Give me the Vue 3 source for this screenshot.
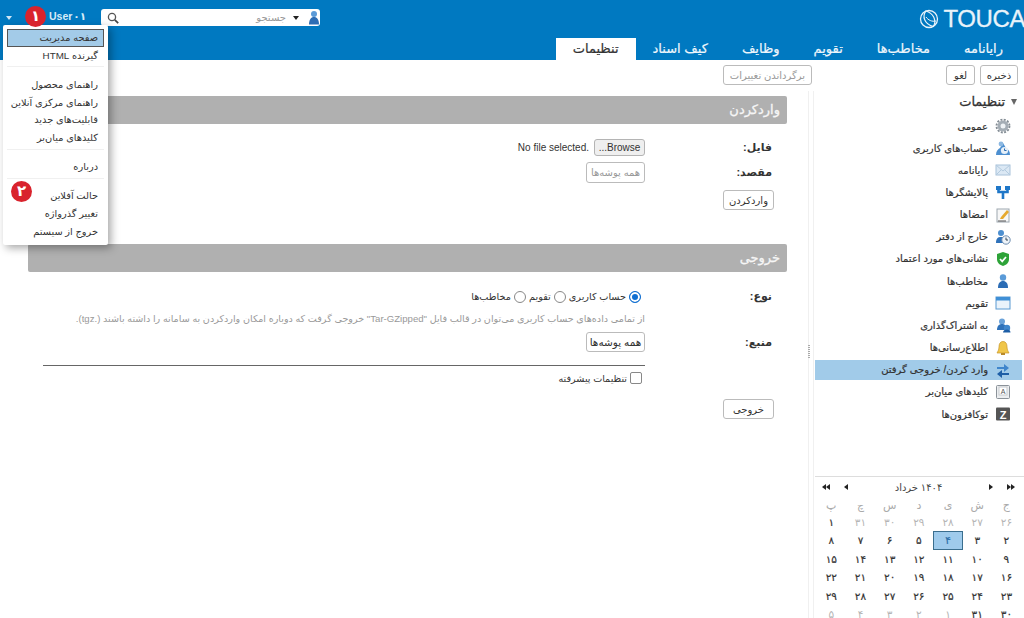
<script setup>
const tabs = ['رایانامه', 'مخاطب‌ها', 'تقویم', 'وظایف', 'کیف اسناد', 'تنظیمات']
const icons = {
  gear: '<circle cx="8" cy="8" r="5.500" fill="#a4adb5"/><circle cx="8" cy="8" r="6.500" fill="none" stroke="#838c94" stroke-width="1.800" stroke-dasharray="2 1.400"/><circle cx="8" cy="8" r="2.500" fill="#eef2f5"/>',
  accounts: '<path d="M1 15c0-4 2-6 4-7l3-5 3 5c2 1 4 3 4 7z" fill="#4d8fd0"/><circle cx="9.500" cy="10.500" r="3.600" fill="#e7f0f8"/><path d="M9.500 8.500v2h2" stroke="#2a6bb0" fill="none"/><circle cx="6" cy="4" r="2.400" fill="#8db9e2"/>',
  mail: '<rect x="1" y="3" width="14" height="10" fill="#dbe8f4" stroke="#a8c2da"/><path d="M1 3l7 6 7-6M1 13l5-5M15 13l-5-5" fill="none" stroke="#b3cade"/>',
  filter: '<path d="M1 2h5v4H1zM10 2h5v4h-5z" fill="#1f77c8"/><path d="M3.500 5v3h9V5M8 8v7" fill="none" stroke="#1f77c8" stroke-width="2.600"/>',
  sign: '<rect x="2" y="2" width="12" height="13" fill="#f7f7f7" stroke="#9da7b0"/><path d="M5 12l1-2 6-7 2 2-6 7z" fill="#e6a92f"/><path d="M3 14h8" stroke="#555"/>',
  ooo: '<circle cx="6" cy="4" r="3" fill="#4d8fd0"/><path d="M1 14c0-5 2-6 5-6s5 1 5 6z" fill="#2f72ba"/><circle cx="11" cy="11" r="4.200" fill="#eef3f8" stroke="#6d8db0"/><path d="M11 8.600V11h2" fill="none" stroke="#345"/>',
  cert: '<path d="M8 1l6 2v5c0 4-3 6-6 7-3-1-6-3-6-7V3z" fill="#2da338"/><path d="M5 8l2.200 2.400L11 6" fill="none" stroke="#fff" stroke-width="1.700"/>',
  contact: '<circle cx="8" cy="4.500" r="3.200" fill="#5b9bd8"/><path d="M3 15c0-5 2-7 5-7s5 2 5 7z" fill="#2c6db5"/>',
  cal: '<rect x="1" y="2" width="14" height="12" fill="#eaf3fb" stroke="#5a9ad2"/><rect x="1" y="2" width="14" height="3.500" fill="#3f8fd6"/>',
  share: '<circle cx="7" cy="4.500" r="3" fill="#6aa2d9"/><path d="M2 13c0-4 2-6 5-6s5 2 5 6z" fill="#2f72ba"/><circle cx="12" cy="11" r="3.200" fill="#3f86cc"/><path d="M8 15.500c0-2 2-3 4-3s3.500 1 3.500 3z" fill="#1d5ea6"/>',
  bell: '<path d="M8 1.500c3 0 4 2.500 4 5.500 0 3 1.500 5 2 6H2c.5-1 2-3 2-6 0-3 1-5.500 4-5.500z" fill="#f0c64a" stroke="#c9962a" stroke-width=".7"/><rect x="6" y="13" width="4" height="2" fill="#b98a2b"/>',
  sync: '<path d="M2 5h7V2l5 4-5 4V7H2z" fill="#3f86cc"/><path d="M14 11H7V8l-5 4 5 4v-3h7z" fill="#1d5ea6"/>',
  keys: '<rect x="1.500" y="1.500" width="13" height="13" rx="1" fill="#eceef0" stroke="#8b9299"/><rect x="4" y="3" width="8" height="8" fill="#fff" stroke="#c6cacd"/><text x="8" y="10" font-size="7" text-anchor="middle" fill="#555" font-family="Liberation Sans">A</text>',
  zimlet: '<rect x="1" y="1.500" width="14" height="13" rx="1" fill="#555"/><text x="8" y="12.500" font-size="11" font-weight="700" text-anchor="middle" fill="#fff" font-family="Liberation Sans">Z</text>'
}
const nav = [
  ['gear', 'عمومی'], ['accounts', 'حساب‌های کاربری'], ['mail', 'رایانامه'], ['filter', 'پالایشگرها'],
  ['sign', 'امضاها'], ['ooo', 'خارج از دفتر'], ['cert', 'نشانی‌های مورد اعتماد'], ['contact', 'مخاطب‌ها'],
  ['cal', 'تقویم'], ['share', 'به اشتراک‌گذاری'], ['bell', 'اطلاع‌رسانی‌ها'], ['sync', 'وارد کردن/ خروجی گرفتن'],
  ['keys', 'کلیدهای میان‌بر'], ['zimlet', 'توکافزون‌ها']
].map(([i, t]) => ({ icon: icons[i], t, sel: i === 'sync' }))
const weekdays = ['ج', 'ش', 'ی', 'د', 'س', 'چ', 'پ']
const fa = n => String(n).replace(/\d/g, d => '۰۱۲۳۴۵۶۷۸۹'[d])
const rows = [
  [26, 27, 28, 29, 30, 31, 1], [2, 3, 4, 5, 6, 7, 8], [9, 10, 11, 12, 13, 14, 15],
  [16, 17, 18, 19, 20, 21, 22], [23, 24, 25, 26, 27, 28, 29], [30, 31, 1, 2, 3, 4, 5]
].map((r, ri) => r.map(n => ({
  n: fa(n),
  off: (ri === 0 && n > 20) || (ri === 5 && n < 10),
  today: ri === 1 && n === 4
})))
const menu = [
  [{ t: 'صفحه مدیریت', sel: true }, { t: 'گیرنده HTML' }],
  [{ t: 'راهنمای محصول' }, { t: 'راهنمای مرکزی آنلاین' }, { t: 'قابلیت‌های جدید' }, { t: 'کلیدهای میان‌بر' }],
  [{ t: 'درباره' }],
  [{ t: 'حالت آفلاین' }, { t: 'تغییر گذرواژه' }, { t: 'خروج از سیستم' }]
]
</script>

<template>
  <div class="app">
    <header class="head">
      <div class="top">
        <span class="caret white-caret"></span>
        <span class="user">User ۰۱</span>
        <div class="search">
          <svg class="mag" width="12" height="12" viewBox="0 0 12 12"><circle cx="5" cy="5" r="3.600" fill="#fff" stroke="#555" stroke-width="1.300"/><path d="M7.800 7.800l3.400 3.400" stroke="#444" stroke-width="1.700"/></svg>
          <span class="search-text" dir="rtl">جستجو</span>
          <span class="caret dark-caret"></span>
          <svg width="10" height="15" viewBox="0 0 10 15"><circle cx="5" cy="4" r="3" fill="#5b9bd8"/><path d="M0 14.500c0-5 2-7.500 5-7.500s5 2.500 5 7.500z" fill="#2c6db5"/></svg>
        </div>
        <div class="logo">
          <svg width="20" height="20" viewBox="0 0 20 20"><circle cx="10" cy="10" r="8.500" fill="none" stroke="#e9f3fa" stroke-width="1.300"/><path d="M7 2C3 7 5 15 14.500 17.500 18 11 14 4 7 2z" fill="none" stroke="#e9f3fa" stroke-width="1.200"/><path d="M7 8c2 3 6 5 10 4" fill="none" stroke="#e9f3fa" stroke-width="1"/></svg>
          <span class="logo-text">TOUCA</span>
        </div>
      </div>
      <nav class="tabs" dir="rtl">
        <span v-for="(t, i) in tabs" :key="t" class="tab" :class="{ active: i === 5 }">{{ t }}</span>
      </nav>
    </header>

    <div class="toolbar" dir="rtl">
      <button class="btn save">ذخیره</button>
      <button class="btn cancel">لغو</button>
      <button class="btn ghost revert">برگرداندن تغییرات</button>
    </div>

    <div class="body" dir="rtl">
      <aside class="side">
        <div class="tree">
          <div class="tree-title"><span class="tri"></span>تنظیمات</div>
          <div v-for="n in nav" :key="n.t" class="item" :class="{ sel: n.sel }">
            <svg class="ico" width="16" height="16" viewBox="0 0 16 16" v-html="n.icon"></svg>
            <span>{{ n.t }}</span>
          </div>
        </div>
        <div class="cal">
          <div class="cal-head">
            <span class="arrows"><i class="ar r"></i><i class="ar r"></i></span>
            <span class="arrows one"><i class="ar r"></i></span>
            <span class="cal-title">۱۴۰۴ خرداد</span>
            <span class="arrows one"><i class="ar l"></i></span>
            <span class="arrows"><i class="ar l"></i><i class="ar l"></i></span>
          </div>
          <div class="cal-grid week">
            <span v-for="d in weekdays" :key="d">{{ d }}</span>
          </div>
          <div v-for="(r, ri) in rows" :key="ri" class="cal-grid">
            <span v-for="(c, ci) in r" :key="ci" class="day" :class="{ off: c.off, today: c.today }">{{ c.n }}</span>
          </div>
        </div>
      </aside>

      <div class="splitter"><span class="grip"></span></div>

      <main class="content">
        <section class="sec">
          <h2 class="sec-title">واردکردن</h2>
          <div class="form form-import">
            <label class="lab">فایل:</label>
            <div class="val file">
              <button class="browse">Browse...</button>
              <span dir="ltr">No file selected.</span>
            </div>
            <label class="lab">مقصد:</label>
            <div class="val"><button class="btn ghost folder">همه پوشه‌ها</button></div>
          </div>
          <button class="btn action">واردکردن</button>
        </section>

        <section class="sec second">
          <h2 class="sec-title">خروجی</h2>
          <div class="form form-export">
            <label class="lab">نوع:</label>
            <div class="val radios">
              <span class="radio on"></span><span>حساب کاربری</span>
              <span class="radio"></span><span>تقویم</span>
              <span class="radio"></span><span>مخاطب‌ها</span>
            </div>
            <span></span>
            <p class="hint">از تمامی داده‌های حساب کاربری می‌توان در قالب فایل "Tar-GZipped" خروجی گرفت که دوباره امکان واردکردن به سامانه را داشته باشند (.tgz).</p>
            <label class="lab">منبع:</label>
            <div class="val"><button class="btn folder">همه پوشه‌ها</button></div>
            <span></span>
            <div class="rule-wrap">
              <hr class="rule" />
              <div class="check"><span class="box"></span><span>تنظیمات پیشرفته</span></div>
            </div>
          </div>
          <button class="btn action export">خروجی</button>
        </section>
      </main>
    </div>

    <div class="menu" dir="rtl">
      <div v-for="(g, gi) in menu" :key="gi" class="menu-group">
        <div v-for="m in g" :key="m.t" class="menu-item" :class="{ sel: m.sel }">{{ m.t }}</div>
      </div>
    </div>
    <span class="badge b1">۱</span>
    <span class="badge b2">۲</span>
  </div>
</template>

<style>
html, body { margin: 0; background: #fff; overflow: hidden; }
</style>

<style scoped>
.app {
  position: relative;
  width: 1024px;
  height: 618px;
  overflow: hidden;
  background: #fff;
  color: #333;
  font-family: "Liberation Sans", "DejaVu Sans", "Noto Sans", sans-serif;
  font-size: 11px;
  display: flex;
  flex-direction: column;
}
button { font-family: inherit; font-size: 10px; margin: 0; }

.head { height: 60px; background: #0079c1; display: flex; flex-direction: column; flex: none; }
.top { height: 38px; display: flex; align-items: flex-start; position: relative; }
.caret { width: 0; height: 0; border-left: 3.5px solid transparent; border-right: 3.5px solid transparent; display: inline-block; }
.white-caret { border-top: 4px solid #cfe6f5; margin: 16px 0 0 6px; }
.dark-caret { border-top: 4px solid #222; margin: 0 10px 0 7px; }
.user { color: #d8ecf8; font-weight: 700; font-size: 10.5px; margin: 10px 0 0 37px; width: 52px; word-spacing: -2px; }
.search {
  width: 219px; height: 17px; margin-top: 9px; background: #fff; border-radius: 3px;
  display: flex; align-items: center; padding: 0 1px 0 6px; box-sizing: border-box;
}
.mag { margin-right: auto; }
.search-text { color: #999; font-size: 10px; }
.logo { margin: 6px -1px 0 auto; display: flex; align-items: center; gap: 4px; color: #e9f3fa; font-size: 24px; line-height: 26px; letter-spacing: -0.4px; }
.logo-text { -webkit-text-stroke: .3px currentColor; }

.tabs { display: flex; height: 22px; padding-right: 4px; }
.tab { padding: 0 17px; line-height: 21px; color: #eef6fc; font-size: 13px; -webkit-text-stroke: .2px currentColor; white-space: nowrap; }
.tab.active { background: #fff; color: #333; }

.toolbar { height: 30px; flex: none; display: flex; align-items: flex-start; padding: 5px 6px 0 0; gap: 5px; box-sizing: border-box; }
.btn { height: 20px; padding: 0 7px; background: #fff; border: 1px solid #bbb; border-radius: 3px; color: #333; font-size: 10px; box-sizing: border-box; cursor: default; white-space: nowrap; }
.save { width: 38px; padding: 0; }
.cancel { width: 29px; padding: 0; }
.ghost { color: #999; }
.revert { margin-right: 129px; width: 89px; padding: 0; }

.body { flex: 1; display: flex; min-height: 0; }
.side { width: 209px; flex: none; display: flex; flex-direction: column; position: relative; }
.tree { flex: 1; min-height: 0; padding-top: 1px; }
.tree-title { height: 22px; line-height: 22px; font-size: 13px; padding-right: 7px; display: flex; align-items: center; gap: 5px; color: #333; -webkit-text-stroke: .3px currentColor; }
.tri { width: 0; height: 0; border-left: 3.5px solid transparent; border-right: 3.5px solid transparent; border-top: 6px solid #666; margin-left: 1px; }
.item { height: 20px; margin: 0 0 2.16px 0; padding-right: 13px; display: flex; align-items: center; gap: 7px; font-size: 10px; color: #333; white-space: nowrap; -webkit-text-stroke: .2px currentColor; }
.tree-title + .item { margin-top: 3px; }
.item.sel { background: #a1cbe9; width: 207px; margin-right: 2px; padding-right: 11px; box-sizing: border-box; }
.ico { flex: none; }

.cal { flex: none; height: 142px; border-top: 1px solid #ddd; padding: 0 2px 0 0; box-sizing: border-box; }
.cal-head { height: 20px; display: flex; align-items: center; padding: 0 5px; font-size: 10px; }
.cal-title { flex: 1; text-align: center; color: #444; }
.arrows { display: inline-flex; width: 12px; justify-content: center; flex: none; }
.arrows.one { margin: 0 12px; width: 4px; }
.ar { width: 0; height: 0; border-top: 3px solid transparent; border-bottom: 3px solid transparent; display: block; }
.ar.r { border-left: 4px solid #222; }
.ar.l { border-right: 4px solid #222; }
.cal-grid { display: grid; grid-template-columns: repeat(7, 29.2px); height: 18.4px; line-height: 18px; text-align: center; padding-right: 1px; font-size: 10.5px; color: #333; -webkit-text-stroke: .2px currentColor; }
.week { color: #aaa; height: 16px; line-height: 16px; font-size: 11px; -webkit-text-stroke: 0; }
.day.off { color: #b5b5b5; -webkit-text-stroke: 0; }
.day.today { background: #9fcbec; border: 1px solid #3a6e8e; box-sizing: border-box; color: #2a6ea8; line-height: 17px; height: 19px; }

.splitter { width: 6px; margin: 1px 1px 0 1px; border-left: 1px solid #f0f0f0; border-right: 1px solid #f0f0f0; flex: none; position: relative; box-sizing: border-box; }
.grip { position: absolute; top: 254px; right: 3px; height: 14px; width: 2px; background-image: repeating-linear-gradient(#aaa 0 1px, transparent 1px 2px); }

.content { width: 759px; margin-right: 20px; padding-top: 6px; flex: none; }
.sec { display: flex; flex-direction: column; }
.sec.second { margin-top: 34px; }
.sec-title { margin: 0; height: 28px; line-height: 27px; background: #b0b0b0; color: #f6f6f6; font-size: 13px; font-weight: 400; -webkit-text-stroke: .3px currentColor; padding: 0 7px; border-radius: 2px; }
.form { display: grid; grid-template-columns: 127px 602px; padding: 0 15px; align-items: center; }
.form-import { margin-top: 15px; grid-template-rows: 17px 21px; row-gap: 6px; }
.form-export { grid-template-rows: 17px 26px 22px auto; row-gap: 0; margin-top: 16px; }
.lab { font-weight: 700; font-size: 11px; color: #333; }
.val { display: flex; align-items: center; }
.file { gap: 5px; font-size: 10px; color: #333; }
.browse { height: 17px; width: 51px; padding: 0; background: #efefef; border: 1px solid #b4b4b4; border-radius: 3px; color: #333; font-size: 10px; }
.folder { width: 59px; padding: 0 2px; }
.form-import .folder { height: 21px; color: #999; }
.form-export .folder { height: 20px; font-size: 10.5px; }
.action { width: 51px; margin: 7px 13px 0 0; padding: 0; }
.action.export { margin-top: 15px; }
.radios { gap: 3px; font-size: 9.7px; color: #333; }
.radio { width: 12px; height: 12px; border: 1px solid #888; border-radius: 50%; box-sizing: border-box; background: #fff; }
.radio.on { border: 1px solid #0f6fd1; box-shadow: inset 0 0 0 2px #fff; background: #0f6fd1; margin-right: 4px; }
.hint { margin: 0; color: #999; font-size: 9.6px; white-space: nowrap; }
.rule-wrap { display: flex; flex-direction: column; }
.rule { width: 100%; margin: 12px 0 0; border: 0; border-top: 1px solid #666; }
.check { display: flex; align-items: center; gap: 3px; margin-top: 6px; margin-right: 3px; font-size: 9.6px; height: 12px; color: #333; }
.box { width: 12px; height: 12px; border: 1px solid #888; border-radius: 2px; box-sizing: border-box; }

.menu {
  position: absolute; left: 3px; top: 25px; width: 105px; height: 220px; background: #fff;
  border-radius: 2px; box-shadow: 3px 3px 9px rgba(0,0,0,.35); box-sizing: border-box; padding-top: 2px;
}
.menu-group { padding: 2px 0; border-bottom: 1px solid #f0f0f0; margin: 0 4px 6.5px; }
.menu-group:last-child { border-bottom: 0; }
.menu-item { height: 17.7px; line-height: 17px; padding-right: 6px; font-size: 9.8px; color: #333; white-space: nowrap; box-sizing: border-box; }
.menu-item.sel { background: #a3cbe8; border: 1px solid #555; padding-right: 5px; line-height: 15px; }
.badge {
  position: absolute; width: 21px; height: 21px; border-radius: 50%; background: #d9232d; color: #fff;
  font-weight: 700; font-size: 15px; line-height: 20px; text-align: center;
}
.b1 { left: 25px; top: 6px; }
.b2 { left: 11px; top: 181px; }
</style>
